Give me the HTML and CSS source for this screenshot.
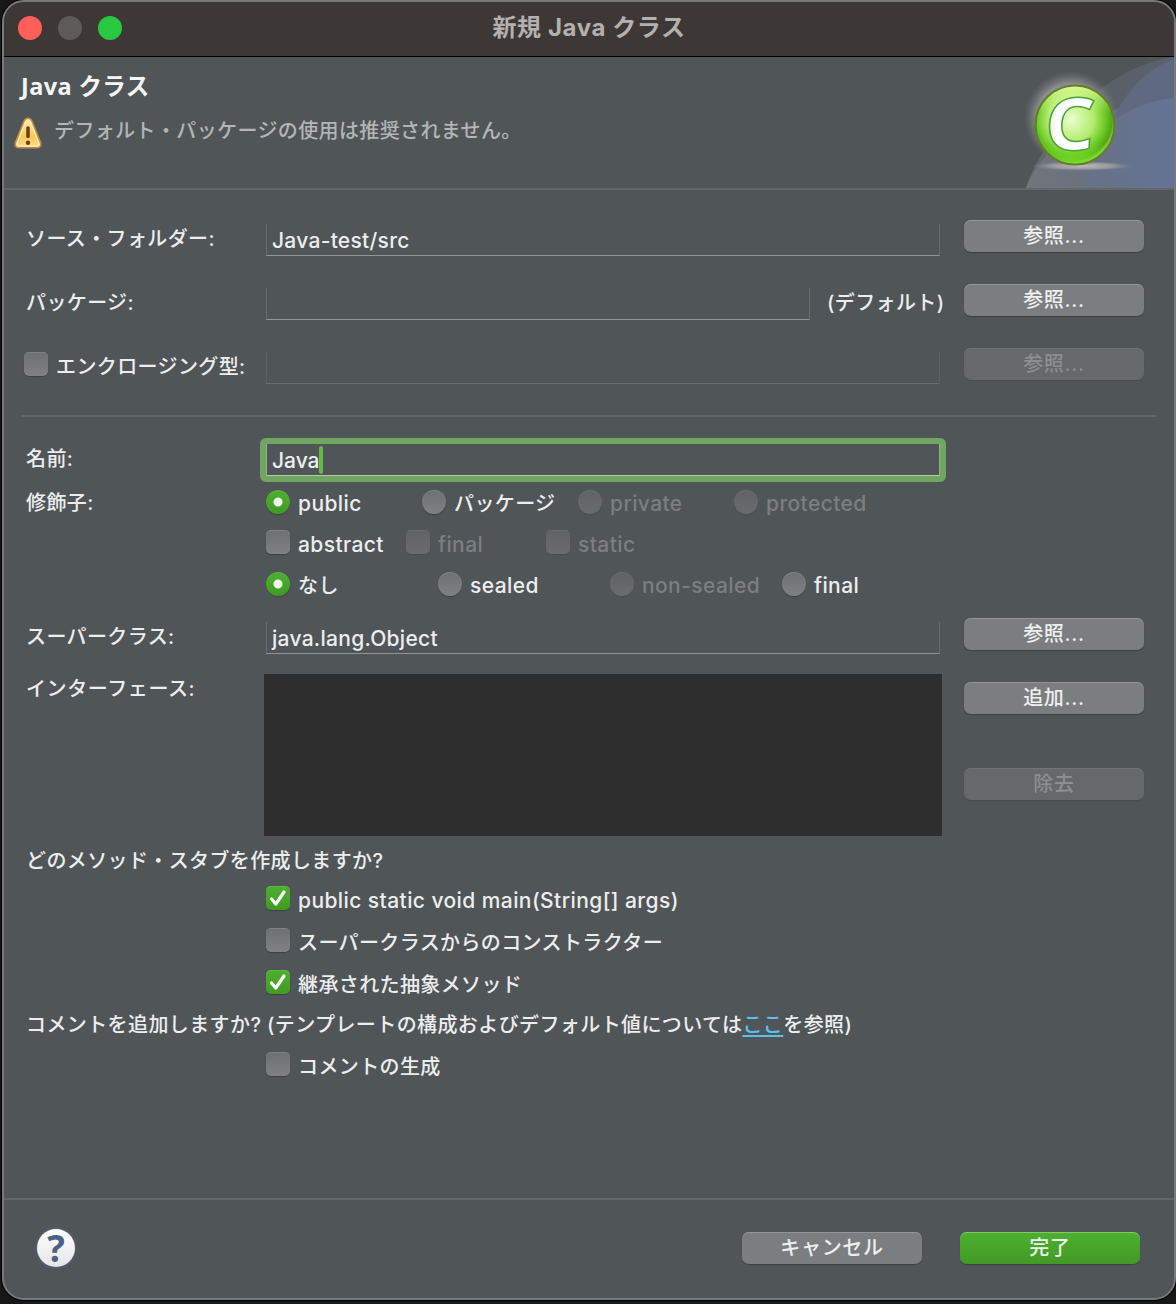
FILE: index.html
```html
<!DOCTYPE html>
<html lang="ja">
<head>
<meta charset="utf-8">
<title>新規 Java クラス</title>
<link rel="stylesheet" href="styles.css">
</head>
<body>
<div class="window">
  <div class="titlebar">
    <div class="lights"><i class="light close"></i><i class="light minimize"></i><i class="light zoom"></i></div>
    <div class="title">新規 Java クラス</div>
  </div>
  <header class="header">
    <div class="header-text">
      <h1>Java クラス</h1>
      <p class="message">
        <svg class="warning" width="28" height="32" viewBox="0 0 28 32">
          <defs><linearGradient id="warn" x1="0" y1="0" x2="0" y2="1"><stop offset="0" stop-color="#fff0c0"/><stop offset=".6" stop-color="#fbc659"/><stop offset="1" stop-color="#ffe08a"/></linearGradient></defs>
          <path d="M14 1.200c-2 0-3.300 1.400-4 3L1.800 24.500C.3 28.500 1.500 30.800 5 30.800h18c3.500 0 4.700-2.300 3.200-6.300L18 4.200c-.7-1.600-2-3-4-3z" fill="url(#warn)" stroke="#c08a4a" stroke-width="1.600"/>
          <path d="M14 3c-1.200 0-2 1-2.500 2.200L3.600 25c-.9 2.700-.2 3.900 1.900 3.900h17c2.100 0 2.800-1.200 1.900-3.900L16.500 5.200C16 4 15.200 3 14 3z" fill="none" stroke="#ffe9ae" stroke-width="1.200"/>
          <path d="M14 11v8.500" stroke="#6b430c" stroke-width="3.600" stroke-linecap="round"/>
          <circle cx="14" cy="25.800" r="2.200" fill="#6b430c"/>
        </svg>
        <span>デフォルト・パッケージの使用は推奨されません。</span>
      </p>
    </div>
    <svg class="banner" width="156" height="131" viewBox="0 0 156 131">
      <defs>
        <linearGradient id="wave" x1="0" x2="1"><stop offset="0" stop-color="#71767a"/><stop offset=".5" stop-color="#687080"/><stop offset="1" stop-color="#657492"/></linearGradient>
        <linearGradient id="swirl" x1="0" x2="1"><stop offset="0" stop-color="#666a6e"/><stop offset=".6" stop-color="#5a6068"/><stop offset="1" stop-color="#59616e"/></linearGradient>
        <radialGradient id="glow"><stop offset=".72" stop-color="#9c9fa0" stop-opacity=".8"/><stop offset="1" stop-color="#7a7e80" stop-opacity="0"/></radialGradient>
        <radialGradient id="ball" cx=".45" cy=".43" r=".56"><stop offset="0" stop-color="#eaffce"/><stop offset=".5" stop-color="#b4ec70"/><stop offset=".78" stop-color="#68c822"/><stop offset=".92" stop-color="#4fa514"/><stop offset="1" stop-color="#8fd940"/></radialGradient>
        <linearGradient id="ballTop" x1="0" y1="0" x2="0" y2="1"><stop offset="0" stop-color="#eaff9c" stop-opacity=".9"/><stop offset=".35" stop-color="#d8ff9c" stop-opacity="0"/><stop offset=".72" stop-color="#7add2c" stop-opacity="0"/><stop offset="1" stop-color="#76e52a" stop-opacity=".9"/></linearGradient>
        <linearGradient id="letter" x1="0" x2="1"><stop offset="0" stop-color="#e0f2d6"/><stop offset=".25" stop-color="#fff"/></linearGradient>
        <radialGradient id="shadow"><stop offset="0" stop-color="#bcbdbe"/><stop offset=".6" stop-color="#9fa1a3" stop-opacity=".85"/><stop offset="1" stop-color="#85888b" stop-opacity="0"/></radialGradient>
      </defs>
      <path d="M8 131C20 90 80 10 156 0v131z" fill="url(#swirl)"/>
      <path d="M8 131C24 90 80 44 156 41v90z" fill="url(#wave)"/>
      <path d="M94 65C106 36 128 12 156 2v39c-22 2-44 10-62 24z" fill="#5f6980"/>
      <path d="M68 131C66 104 76 78 94 65c18-14 40-22 62-24v90z" fill="#6678a2" opacity=".22"/>
      <ellipse cx="64" cy="109" rx="51" ry="5" fill="url(#shadow)"/>
      <circle cx="53" cy="61" r="47" fill="url(#glow)"/>
      <circle cx="57" cy="68" r="40" fill="url(#ball)"/>
      <circle cx="57" cy="68" r="39.500" fill="url(#ballTop)" stroke="#667c2c" stroke-width="2.200"/>
      <text class="badge-letter" transform="translate(26 92.500) skewX(-3) scale(1.060 1)" x="0" y="0" fill="url(#letter)" stroke="#50a038">C</text>
    </svg>
  </header>

  <main class="form">
    <div class="row tall">
      <label class="label">ソース・フォルダー:</label>
      <div class="field"><span class="latin">Java-test/src</span></div>
      <button class="button">参照...</button>
    </div>
    <div class="row tall">
      <label class="label">パッケージ:</label>
      <div class="split"><div class="field"></div><span class="note">(デフォルト)</span></div>
      <button class="button">参照...</button>
    </div>
    <div class="row tall">
      <label class="label option enclosing"><i class="check"></i><span>エンクロージング型:</span></label>
      <div class="field disabled"></div>
      <button class="button disabled">参照...</button>
    </div>
    <div class="divider"></div>
    <div class="row name">
      <label class="label">名前:</label>
      <div class="focus"><div class="field"><span class="latin">Java</span><i class="caret"></i></div></div>
    </div>
    <div class="row modifiers">
      <span class="label">修飾子:</span>
      <div class="options access">
        <label class="option"><i class="radio on"></i><span class="latin">public</span></label>
        <label class="option"><i class="radio"></i><span>パッケージ</span></label>
        <label class="option disabled"><i class="radio"></i><span class="latin">private</span></label>
        <label class="option disabled"><i class="radio"></i><span class="latin">protected</span></label>
      </div>
    </div>
    <div class="row modifiers">
      <span class="label"></span>
      <div class="options flags">
        <label class="option"><i class="check"></i><span class="latin">abstract</span></label>
        <label class="option disabled"><i class="check"></i><span class="latin">final</span></label>
        <label class="option disabled"><i class="check"></i><span class="latin">static</span></label>
      </div>
    </div>
    <div class="row sealing">
      <span class="label"></span>
      <div class="options seal">
        <label class="option"><i class="radio on"></i><span>なし</span></label>
        <label class="option"><i class="radio"></i><span class="latin">sealed</span></label>
        <label class="option disabled"><i class="radio"></i><span class="latin">non-sealed</span></label>
        <label class="option"><i class="radio"></i><span class="latin">final</span></label>
      </div>
    </div>
    <div class="row super">
      <label class="label">スーパークラス:</label>
      <div class="field"><span class="latin">java.lang.Object</span></div>
      <button class="button">参照...</button>
    </div>
    <div class="row interfaces">
      <label class="label">インターフェース:</label>
      <div class="list"></div>
      <div class="list-buttons"><button class="button">追加...</button><button class="button disabled">除去</button></div>
    </div>
    <p class="question stubs">どのメソッド・スタブを作成しますか?</p>
    <div class="stub"><label class="option"><i class="check on"><svg width="24" height="24" viewBox="0 0 24 24"><path d="M5.500 13l4.300 5L18 6"/></svg></i><span class="latin">public static void main(String[] args)</span></label></div>
    <div class="stub"><label class="option"><i class="check"></i><span>スーパークラスからのコンストラクター</span></label></div>
    <div class="stub"><label class="option"><i class="check on"><svg width="24" height="24" viewBox="0 0 24 24"><path d="M5.500 13l4.300 5L18 6"/></svg></i><span>継承された抽象メソッド</span></label></div>
    <p class="question comments">コメントを追加しますか? (テンプレートの構成およびデフォルト値については<a>ここ</a>を参照)</p>
    <div class="stub last"><label class="option"><i class="check"></i><span>コメントの生成</span></label></div>
  </main>

  <footer class="footer">
    <div class="help">?</div>
    <button class="button">キャンセル</button>
    <button class="button primary">完了</button>
  </footer>
</div>
</body>
</html>
```
FILE: styles.css
```css
* { box-sizing: border-box; }

body {
  margin: 0;
  height: 1304px;
  padding-left: 2px;
  overflow: hidden;
  background: #181718;
  color: #eceeee;
  font: 500 20px/28px Inter, "Noto Sans CJK JP", sans-serif;
  letter-spacing: .38px;
}

.window {
  display: flex;
  flex-direction: column;
  width: 1174px;
  height: 1300px;
  border: 2px solid #77797a;
  border-radius: 22px;
  overflow: hidden;
  background: #505558;
  box-shadow: 0 0 0 1px #000;
}

.titlebar {
  display: grid;
  grid-template-columns: 160px 1fr 160px;
  align-items: center;
  flex: none;
  height: 55px;
  padding-bottom: 3px;
  border-bottom: 1px solid #000;
  background: #3d3835;
}
.lights { display: flex; gap: 16px; padding-left: 14px; }
.light { width: 24px; height: 24px; border-radius: 50%; }
.close { background: #ff5f57; }
.minimize { background: #5f5b58; }
.zoom { background: #28c840; }
.title {
  text-align: center;
  color: #b4b0ae;
  font-size: 24px;
  font-weight: 700;
  letter-spacing: .6px;
}

.header {
  display: flex;
  justify-content: space-between;
  flex: none;
  height: 133px;
  border-bottom: 2px solid #636769;
}
.header-text { padding: 13px 0 0 10px; }
h1 {
  margin: 0 0 0 7px;
  font: 700 23.500px/32px "Noto Sans", "Noto Sans CJK JP", sans-serif;
  letter-spacing: .4px;
  color: #f4f5f5;
}
.message {
  display: flex;
  align-items: center;
  gap: 12px;
  margin: 12px 0 0;
  color: #b3b5b6;
}
.message span { padding-bottom: 2px; }
.warning { flex: none; margin-top: 3px; }
.banner { display: block; flex: none; }
.badge-letter {
  font: 700 73px "Noto Sans", sans-serif;
  stroke-width: 1.500px;
  letter-spacing: 0;
}

.form { flex: 1; padding: 14px 18px 0; }
.row {
  display: grid;
  grid-template-columns: 240px 674px 180px;
  align-items: center;
  padding-left: 4px;
}
.row > :nth-child(3) { margin-left: 24px; width: 180px; }
.label { padding-top: 5px; white-space: nowrap; }
.tall { height: 64px; }
.super { height: 56px; }

.latin { font-size: 21px; letter-spacing: .4px; }
.field .latin { letter-spacing: .28px; }

.field {
  height: 32px;
  margin-top: 8px;
  padding: 3px 5px 0;
  border: solid #676b6e;
  border-width: 0 1px 1px;
  border-bottom-color: #909496;
}
.field.disabled { border-color: #5c6063; border-bottom-color: #6b6f71; }
.split { display: flex; align-items: center; }
.split .field { flex: none; width: 544px; }
.note { padding: 5px 0 0 17px; white-space: nowrap; }

.button {
  display: block;
  width: 180px;
  height: 32px;
  padding: 1px 0 0;
  border: 0;
  border-radius: 7px;
  background: #7b7e80;
  box-shadow: 0 1px 1px #3d4143, inset 0 1px #929597;
  color: #eeefef;
  font: inherit;
  line-height: 31px;
  letter-spacing: .7px;
}
.button.disabled { background: #65696b; color: #8b8f90; box-shadow: 0 1px 1px #484d4f, inset 0 1px #707476; }
.button.primary { background: linear-gradient(#4eb02e, #419a25); box-shadow: 0 1px 1px #3d4143, inset 0 1px #83c86c; }

.divider { height: 2px; margin: 19px 0 21px; background: #636769; }

.name { height: 44px; }
.name .label { padding: 0 0 2px; }
.focus {
  width: 686px;
  height: 44px;
  margin-left: -6px;
  border: 6px solid #70a562;
  border-radius: 6px;
}
.focus .field {
  display: flex;
  align-items: center;
  margin: 0;
  padding-top: 0;
  border-color: #70a562 #8fb784 #b3ccab;
}
.focus .latin { padding-top: 2px; letter-spacing: 0; }
.caret { width: 4px; height: 28px; border-radius: 2px; background: #62bb46; margin-left: -1px; }

.modifiers { height: 40px; }
.modifiers .label { padding-top: 2px; }
.sealing { height: 44px; }
.options { display: grid; }
.access { grid-template-columns: repeat(4, 156px); }
.flags { grid-template-columns: repeat(3, 140px); }
.seal { grid-template-columns: repeat(4, 172px); }

.option { display: flex; align-items: center; gap: 8px; white-space: nowrap; }
.option span { padding-top: 3px; }
.flags .option span { padding-top: 5px; }
.option.disabled { color: #7b7f81; }
.enclosing { margin-left: -2px; padding-top: 0; }
.enclosing span { padding-top: 5px; }

.check, .radio {
  flex: none;
  width: 24px;
  height: 24px;
  border-radius: 5px;
  background: linear-gradient(#6c7072, #7f8284);
  box-shadow: 0 1px 1px #3d4143, inset 0 1px #7f8284;
}
.radio { border-radius: 50%; }
.disabled > .check, .disabled > .radio {
  background: linear-gradient(#5f6366, #686c6e);
  box-shadow: 0 1px 1px #484d4f, inset 0 1px #686c6e;
}
.on { background: linear-gradient(#4eb02e, #419a25); box-shadow: 0 1px 1px #3d4143, inset 0 1px #5bb83e; }
.radio.on { background: radial-gradient(circle, #eef7ea 4px, transparent 5px), linear-gradient(#4eb02e, #419a25); }
.check svg { display: block; }
.check path { fill: none; stroke: #fff; stroke-width: 3.200; stroke-linecap: round; stroke-linejoin: round; }

.interfaces { height: 176px; align-items: start; }
.interfaces .label { padding-top: 13px; letter-spacing: .6px; }
.list { width: 678px; height: 162px; margin: 12px 0 0 -2px; background: #2e2e2e; }
.list-buttons { padding-top: 20px; }
.list-buttons .disabled { margin-top: 54px; }

.question { margin: 0; padding-left: 4px; white-space: nowrap; }
.stubs { height: 39px; padding-top: 9px; }
.comments { height: 42px; padding-top: 8px; letter-spacing: .4px; }
.comments a { color: #5ac0ee; text-decoration: underline; text-underline-offset: 3px; }
.stub { display: flex; align-items: center; height: 42px; padding-left: 244px; }
.stub .option span { padding-top: 5px; }
.stub .latin { letter-spacing: .42px; }
.stub.last { height: 38px; }

.footer {
  display: flex;
  align-items: center;
  flex: none;
  height: 100px;
  padding: 0 34px 2px 33px;
  border-top: 2px solid #636769;
}
.help {
  width: 38px;
  height: 38px;
  margin-right: auto;
  border-radius: 50%;
  background: linear-gradient(#fff, #e4e5e8);
  box-shadow: 0 0 3px #55749f;
  color: #4a6285;
  font: 700 37px/38px "Open Sans", sans-serif;
  letter-spacing: 0;
  text-align: center;
}
.footer .primary { margin-left: 38px; }
```
